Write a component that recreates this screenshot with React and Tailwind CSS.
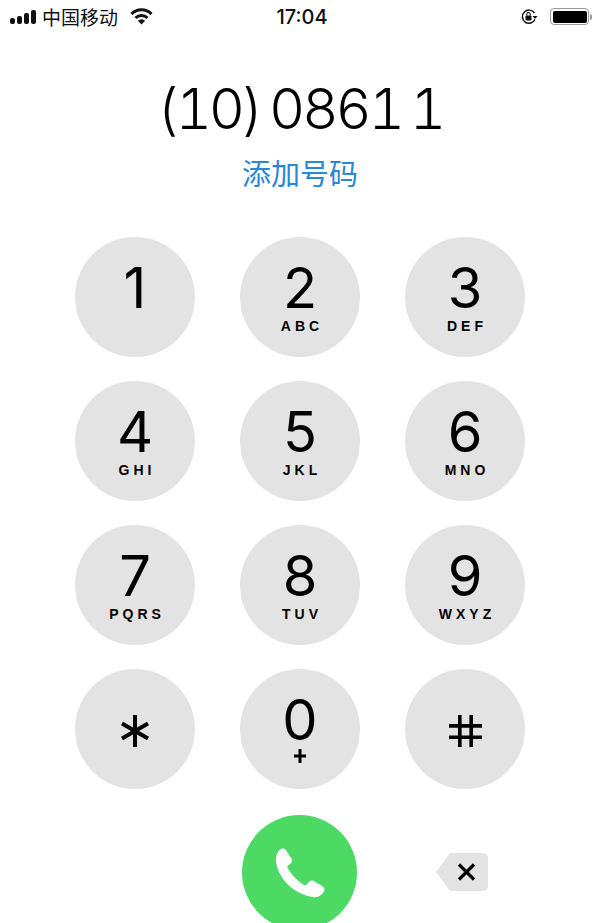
const keys = [
  ["1", ""],
  ["2", "ABC"],
  ["3", "DEF"],
  ["4", "GHI"],
  ["5", "JKL"],
  ["6", "MNO"],
  ["7", "PQRS"],
  ["8", "TUV"],
  ["9", "WXYZ"],
];

const sans = "font-['Inter','Noto_Sans_CJK_SC',sans-serif]";

function Key({digit, letters}) {
    return (
        <div className="flex h-[120px] w-[120px] flex-col items-center rounded-full bg-[#e3e3e3] text-black">
            <span className={`mt-[21px] h-[60px] text-[56px] font-[375] leading-[60px] ${sans}`}>{digit}</span>
            {letters && (
                <span className="mt-[-1px] pl-[4px] text-[14px] font-bold leading-[18px] tracking-[4px] font-['Liberation_Sans',sans-serif]">
                    {letters}
                </span>
            )}
        </div>
    );
}

function StatusBar() {
    return (
        <div className="grid h-[33px] grid-cols-3 items-center text-[#111]">
            <div className="flex items-center pl-[10px]">
                <svg width="26" height="14" viewBox="0 0 26 14" fill="#111">
                    <rect x="0" y="8" width="5" height="6" rx="2" />
                    <rect x="7" y="6" width="5" height="8" rx="2" />
                    <rect x="14" y="3" width="5" height="11" rx="2" />
                    <rect x="21" y="0" width="5" height="14" rx="2" />
                </svg>
                <span className="ml-[6px] text-[19px] leading-[24px] font-['Noto_Sans_CJK_SC',sans-serif]">中国移动</span>
                <svg className="ml-[12px]" width="23" height="17" viewBox="0 0 23 17" fill="none" stroke="#111" strokeWidth="3">
                    <path d="M1.500 6a14 14 0 0 1 20 0" />
                    <path d="M5.500 10a8.500 8.500 0 0 1 12 0" />
                    <path d="M11.500 16.500l-3.600-3.700a5 5 0 0 1 7.200 0z" fill="#111" stroke="none" />
                </svg>
            </div>
            <div className="pl-[4px] text-center text-[20px] font-medium leading-[24px] font-['Inter',sans-serif]">17:04</div>
            <div className="flex items-center justify-end pr-[8px]">
                <svg width="19" height="18" viewBox="0 0 19 18" fill="none">
                    <path d="M14.500 5a6.600 6.600 0 1 0 .5 6.500" stroke="#111" strokeWidth="1.500" />
                    <path d="M12.500 8h5l-2.500 3z" fill="#111" />
                    <rect x="5.500" y="7.500" width="6" height="5" rx="1" fill="#111" />
                    <path d="M6.800 7.500V6.200a1.700 1.700 0 0 1 3.400 0v1.300" stroke="#111" strokeWidth="1.100" />
                </svg>
                <div className="ml-[11px] flex h-[17px] w-[39px] items-center rounded-[4px] border-[1.5px] border-[#999] p-[1.5px]">
                    <div className="h-full w-full rounded-[2px] bg-black" />
                </div>
                <div className="ml-[1px] h-[6px] w-[2px] rounded-r-full bg-[#999]" />
            </div>
        </div>
    );
}

export default function App() {
    return (
        <div className="flex h-[923px] w-[600px] flex-col items-center overflow-hidden bg-white">
            <div className="w-full"><StatusBar /></div>

            <h1 className={`mt-[45px] h-[62px] whitespace-pre text-[56px] font-[350] leading-[62px] tabular-nums tracking-[-3px] [word-spacing:-4px] text-black ${sans}`}>
                (10) 0861 1
            </h1>
            <p className="mt-[13px] text-[29px] leading-[38px] text-[#2b86d6] font-['Noto_Sans_CJK_SC',sans-serif]">添加号码</p>

            <div className="mt-[46px] grid grid-cols-[120px_120px_120px] gap-x-[45px] gap-y-[24px]">
                {keys.map(([digit, letters]) => <Key key={digit} digit={digit} letters={letters} />)}

                <div className="flex h-[120px] w-[120px] items-center justify-center rounded-full bg-[#e3e3e3] pt-[4px]">
                    <svg width="30" height="32" viewBox="0 0 30 32" stroke="#000" strokeWidth="4" fill="none">
                        <path d="M15 0v32M2 8.500l26 15M28 8.500l-26 15" />
                    </svg>
                </div>
                <div className="flex h-[120px] w-[120px] flex-col items-center rounded-full bg-[#e3e3e3] text-black">
                    <span className={`mt-[21px] h-[60px] text-[56px] font-[375] leading-[60px] ${sans}`}>0</span>
                    <svg className="mt-[-1px]" width="12" height="14" viewBox="0 0 12 14" stroke="#000" strokeWidth="3" fill="none">
                        <path d="M6 0v14M0 7h12" />
                    </svg>
                </div>
                <div className="flex h-[120px] w-[120px] items-center justify-center rounded-full bg-[#e3e3e3] pt-[4px]">
                    <svg width="33" height="32" viewBox="0 0 32 31" stroke="#000" strokeWidth="3.500" fill="none">
                        <path d="M10.500 0v31M21.500 0v31M0 10.500h32M0 21.500h32" />
                    </svg>
                </div>
            </div>

            <div className="mt-[26px] grid grid-cols-[120px_120px_120px] gap-x-[45px]">
                <div />
                <div className="ml-[2px] flex h-[115px] w-[115px] items-center justify-center rounded-full bg-[#4cd964]">
                    <svg className="ml-[3px] mt-[3px]" width="55" height="55" viewBox="0 0 52 52" fill="#fff">
                        <path d="M5 3c2-2 5-2 6.500.3l5 7.500c1.200 1.800.7 3.400-.8 4.700l-2.500 2.200c-.7.600-.8 1.300-.3 2.200 3.500 6.500 9 12 15.500 16 .9.500 1.700.4 2.300-.3l2.500-2.600c1.300-1.400 3-1.700 4.800-.7l7.800 4.700c2.300 1.400 2.500 3.800.8 6-2.400 3-6 5.200-10 4.300C18 44 5.500 30.500 2.300 16.500 1.300 11.500 1.800 6.500 5 3z" />
                    </svg>
                </div>
                <div className="flex h-[115px] items-center pb-[2px] pl-[30px]">
                    <svg width="54" height="40" viewBox="0 0 54 40">
                        <path d="M17 1h31a5 5 0 0 1 5 5v28a5 5 0 0 1-5 5H17a4 4 0 0 1-3-1.300L1 20 14 2.300A4 4 0 0 1 17 1z" fill="#e3e3e3" />
                        <path d="M24 12.500l15 15M39 12.500l-15 15" stroke="#000" strokeWidth="3.200" fill="none" />
                    </svg>
                </div>
            </div>
        </div>
    );
}
